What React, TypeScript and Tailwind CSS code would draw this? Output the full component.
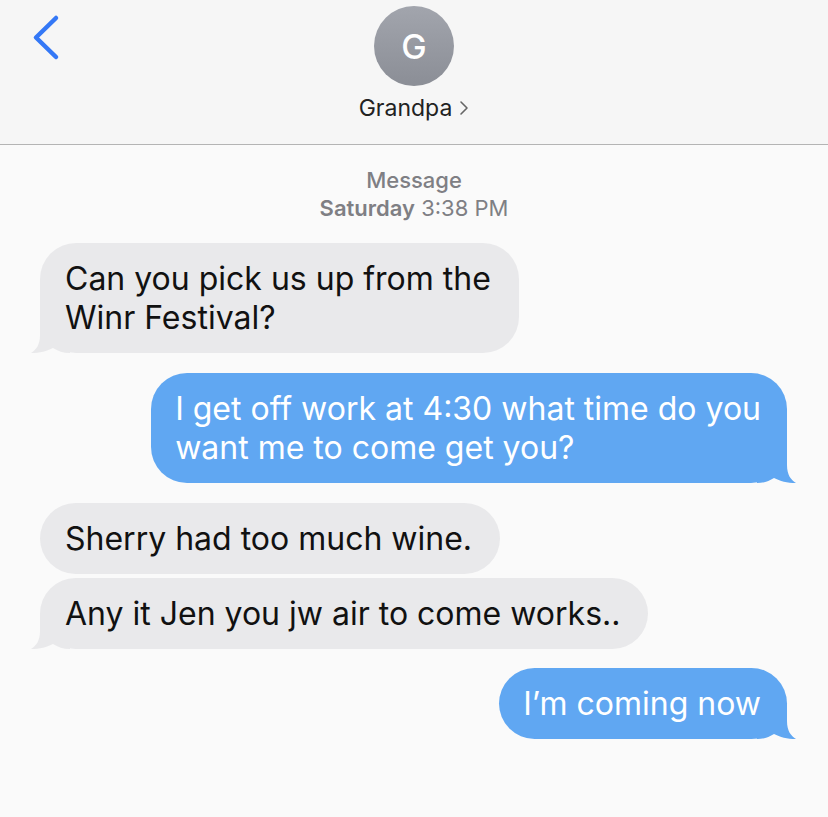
import React from "react";

const GRAY = "#e9e9eb";
const BLUE = "#60a7f2";

function LeftTail() {
  return (
    <svg className="absolute left-[-10px] bottom-0" width="40" height="36" viewBox="0 0 40 36">
      <path d="M10 0 L10 18 C10 28 6 33 1 36 C 10 36 17 34 23 31 C 28 34 33 36 40 36 L 40 0 Z" fill={GRAY} />
    </svg>
  );
}

function RightTail() {
  return (
    <svg className="absolute right-[-10px] bottom-0" width="40" height="36" viewBox="0 0 40 36">
      <path d="M30 0 L30 18 C30 28 34 33 39 36 C 30 36 23 34 17 31 C 12 34 7 36 0 36 L 0 0 Z" fill={BLUE} />
    </svg>
  );
}

function In({ children, tail }: { children: React.ReactNode; tail?: boolean }) {
  return (
    <div className="flex justify-start pl-[40px]">
      <div className="relative max-w-[620px] rounded-[36px] bg-[#e9e9eb] pl-[25px] pr-[28px] py-[16px] text-[32px] leading-[39px] text-[#111]">
        {tail && <LeftTail />}
        <span className="relative">{children}</span>
      </div>
    </div>
  );
}

function Out({ children, tail }: { children: React.ReactNode; tail?: boolean }) {
  return (
    <div className="flex justify-end pr-[41px]">
      <div className="relative max-w-[660px] rounded-[36px] bg-[#60a7f2] pl-[24px] pr-[26px] py-[16px] text-[32px] leading-[39px] text-white">
        {tail && <RightTail />}
        <span className="relative">{children}</span>
      </div>
    </div>
  );
}

export default function App() {
  return (
    <div
      className="w-[828px] h-[817px] bg-[#fafafa] overflow-hidden"
      style={{ fontFamily: "Inter, 'Liberation Sans', sans-serif" }}
    >
      <header className="relative h-[145px] bg-[#f6f6f6] border-b border-[#b4b4b4] flex flex-col items-center">
        <svg className="absolute left-[30px] top-[14px]" width="32" height="48" viewBox="0 0 32 48">
          <path d="M26 4 L6 23.5 L26 43" fill="none" stroke="#3478f6" strokeWidth="4.5" strokeLinecap="round" strokeLinejoin="round" />
        </svg>
        <div className="mt-[6px] w-[80px] h-[80px] rounded-full bg-gradient-to-b from-[#a2a5ad] to-[#8b8e96] flex items-center justify-center text-white text-[34px] font-medium">
          G
        </div>
        <div className="mt-[8px] flex items-center gap-[7px] text-[23px] leading-[28px] text-[#222]">
          <span>Grandpa</span>
          <svg width="10" height="18" viewBox="0 0 10 18">
            <path d="M2 3 L8 9 L2 15" fill="none" stroke="#666" strokeWidth="1.6" strokeLinecap="round" strokeLinejoin="round" />
          </svg>
        </div>
      </header>

      <div className="pt-[21px] flex flex-col items-center text-[22px] leading-[28px] text-[#7f7f84]">
        <div className="font-medium">Message</div>
        <div>
          <span className="font-semibold">Saturday</span> 3:38 PM
        </div>
      </div>

      <div className="mt-[21px] flex flex-col">
        <In tail>
          Can you pick us up from the
          <br />
          Winr Festival?
        </In>
        <div className="h-[20px]" />
        <Out tail>
          I get off work at 4:30 what time do you
          <br />
          want me to come get you?
        </Out>
        <div className="h-[20px]" />
        <In>Sherry had too much wine.</In>
        <div className="h-[4px]" />
        <In tail>Any it Jen you jw air to come works..</In>
        <div className="h-[19px]" />
        <Out tail>I’m coming now</Out>
      </div>
    </div>
  );
}
